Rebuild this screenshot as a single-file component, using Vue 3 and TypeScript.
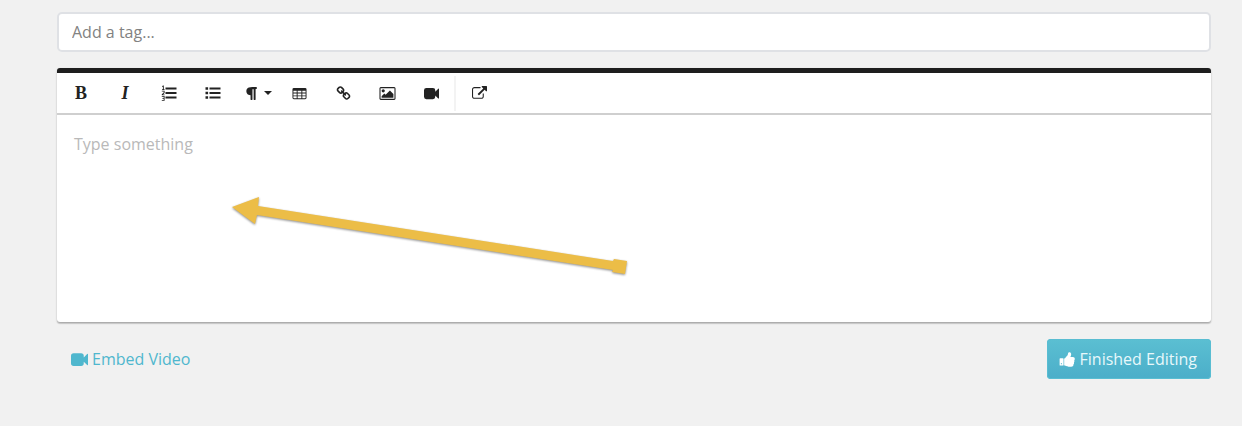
<script setup lang="ts">
import { ref } from 'vue'

interface Tool {
  name: string
  label: string
  view?: string
  path?: string
  text?: string
}

const tag = ref('')
const body = ref('')

const camera =
  'M2.500 2H9.500Q12 2 12 4.500V6L15.200 2.800Q16 2.200 16 3.200V12.800Q16 13.800 15.200 13.200L12 10V11.500Q12 14 9.500 14H2.500Q0 14 0 11.500V4.500Q0 2 2.500 2Z'
const thumb =
  'M320 1344q0-26-19-45t-45-19q-27 0-45.5 19t-18.5 45q0 27 18.5 45.5t45.5 18.5q26 0 45-18.5t19-45.5zm160-512v640q0 26-19 45t-45 19h-288q-26 0-45-19t-19-45v-640q0-26 19-45t45-19h288q26 0 45 19t19 45zm1184 0q0 86-55 149 15 44 15 76 3 76-43 137 17 56 0 117-15 57-54 94 9 112-49 181-64 76-197 78h-129q-66 0-144-15.5t-121.5-29-120.5-39.5q-123-43-158-44-26-1-45-19.5t-19-44.5v-641q0-25 18-43.5t43-20.5q24-2 76-59t101-121q68-87 101-120 18-18 31-48t17.5-48.5 13.5-60.5q7-39 12.5-61t19.5-52 34-50q19-19 45-19 46 0 82.5 10.5t60 26 40 40.5 24 45 12 50 5 45 .5 39q0 38-9.5 76t-19 60-27.5 56q-3 6-10 18t-11 22-8 24h277q78 0 135 57t57 135z'

const tools: Tool[] = [
  { name: 'bold', label: 'Bold', text: 'B' },
  { name: 'italic', label: 'Italic', text: 'I' },
  {
    name: 'ordered',
    label: 'Ordered list',
    view: '0 0 16 16',
    path: 'M4.500 2.500h11v2h-11zM4.500 7h11v2h-11zM4.500 11.500h11v2h-11zM1 1.200L2 .5h.8v3.700h.8V5H1v-.8h.9V1.800H1zM.8 5.800h2.800v2.200L2 9.400h1.600v.8H.8V9.200L2.700 7.600V6.600H.8zM.8 11h2.800v4.800H.8V15h1.900v-1.200H1.400V13h1.300v-1.200H.8z',
  },
  {
    name: 'unordered',
    label: 'Unordered list',
    view: '0 0 16 16',
    path: 'M4.500 2.500h11v2h-11zM4.500 7h11v2h-11zM4.500 11.500h11v2h-11zM.5 2.200h2.600v2.600H.5zM.5 6.700h2.600v2.600H.5zM.5 11.200h2.600v2.600H.5z',
  },
  {
    name: 'paragraph',
    label: 'Paragraph format',
    view: '0 0 1792 1792',
    path: 'M1534 189v73q0 29-18.5 61t-42.5 32q-50 0-54 1-26 6-32 31-3 11-3 64v1152q0 25-18 43t-43 18h-108q-25 0-43-18t-18-43v-1218h-143v1218q0 25-17.5 43t-43.5 18h-108q-26 0-43.5-18t-17.5-43v-496q-147-12-245-59-126-58-192-179-64-117-64-259 0-166 88-286 88-118 209-159 111-37 417-37h479q25 0 43 18t18 43z',
  },
  {
    name: 'table',
    label: 'Insert table',
    view: '0 0 16 16',
    path: 'M2 2h12q1.500 0 1.500 1.500v9q0 1.500-1.500 1.500H2Q.5 14 .5 12.500v-9Q.5 2 2 2zM1.500 5v2h3.500V5zM6 5v2h4V5zM11 5v2h3.500V5zM1.500 8v2h3.500V8zM6 8v2h4V8zM11 8v2h3.500V8zM1.500 11v1.500q0 .5.5.5h3v-2zM6 11v2h4v-2zM11 11v2h3q.5 0 .5-.5V11z',
  },
  {
    name: 'link',
    label: 'Insert link',
    view: '0 0 1792 1792',
    path: 'M1520 1216q0-40-28-68l-208-208q-28-28-68-28-42 0-72 32 3 3 19 18.5t21.5 21.5 15 19 13 25.5 3.5 27.5q0 40-28 68t-68 28q-15 0-27.5-3.5t-25.5-13-19-15-21.5-21.5-18.5-19q-33 31-33 73 0 40 28 68l206 207q27 27 68 27 40 0 68-26l147-146q28-28 28-67zm-703-705q0-40-28-68l-206-207q-28-28-68-28-39 0-68 27l-147 146q-28 28-28 67 0 40 28 68l208 208q27 27 68 27 42 0 72-31-3-3-19-18.5t-21.5-21.5-15-19-13-25.5-3.5-27.5q0-40 28-68t68-28q15 0 27.5 3.5t25.5 13 19 15 21.5 21.5 18.5 19q33-31 33-73zm895 705q0 120-85 203l-147 146q-83 83-203 83-121 0-204-85l-206-207q-83-83-83-203 0-123 88-209l-88-88q-86 88-208 88-120 0-204-84l-208-208q-84-84-84-204t85-203l147-146q83-83 203-83 121 0 204 85l206 207q83 83 83 203 0 123-88 209l88 88q86-88 208-88 120 0 204 84l208 208q84 84 84 204z',
  },
  {
    name: 'image',
    label: 'Insert image',
    view: '-64 0 1920 1792',
    path: 'M576 576q0 80-56 136t-136 56-136-56-56-136 56-136 136-56 136 56 56 136zm1024 384v448h-1408v-192l320-320 160 160 512-512zm96-704h-1600q-13 0-22.5 9.5t-9.5 22.5v1216q0 13 9.5 22.5t22.5 9.5h1600q13 0 22.5-9.5t9.5-22.5v-1216q0-13-9.5-22.5t-22.5-9.5zm160 32v1216q0 66-47 113t-113 47h-1600q-66 0-113-47t-47-113v-1216q0-66 47-113t113-47h1600q66 0 113 47t47 113z',
  },
  { name: 'video', label: 'Insert video', view: '0 0 16 16', path: camera },
  {
    name: 'external',
    label: 'Open in new window',
    view: '0 0 1792 1792',
    path: 'M1408 928v320q0 119-84.5 203.5t-203.5 84.5h-832q-119 0-203.5-84.5t-84.5-203.5v-832q0-119 84.5-203.5t203.5-84.5h704q14 0 23 9t9 23v64q0 14-9 23t-23 9h-704q-66 0-113 47t-47 113v832q0 66 47 113t113 47h832q66 0 113-47t47-113v-320q0-14 9-23t23-9h64q14 0 23 9t9 23zm384-864v512q0 26-19 45t-45 19-45-19l-176-176-652 652q-10 10-23 10t-23-10l-114-114q-10-10-10-23t10-23l652-652-176-176q-19-19-19-45t19-45 45-19h512q26 0 45 19t19 45z',
  },
]
</script>

<template>
  <main class="page">
    <input v-model="tag" class="tag" type="text" placeholder="Add a tag..." aria-label="Add a tag" />

    <section class="editor">
      <div class="toolbar" role="toolbar" aria-label="Formatting">
        <template v-for="tool in tools" :key="tool.name">
          <span v-if="tool.name === 'external'" class="separator"></span>
          <button type="button" class="tool" :class="tool.name" :aria-label="tool.label">
            <span v-if="tool.text">{{ tool.text }}</span>
            <svg v-else class="icon" :viewBox="tool.view" aria-hidden="true">
              <path :d="tool.path" fill-rule="evenodd" />
            </svg>
            <span v-if="tool.name === 'paragraph'" class="caret"></span>
          </button>
        </template>
      </div>
      <textarea v-model="body" class="body" placeholder="Type something" aria-label="Content"></textarea>
      <svg class="arrow" viewBox="0 0 404 86" aria-hidden="true">
        <path d="M4 14 31 4 30 13 385 68 386 66 399 68 397 81 384 79 385 77 29 22 27 31Z" />
      </svg>
    </section>

    <footer class="actions">
      <a class="embed" href="#">
        <svg class="action-icon" viewBox="0 0 16 16" aria-hidden="true"><path :d="camera" /></svg>
        <span>Embed Video</span>
      </a>
      <button type="button" class="finish">
        <svg class="action-icon" viewBox="0 0 1792 1792" aria-hidden="true"><path :d="thumb" /></svg>
        <span>Finished Editing</span>
      </button>
    </footer>
  </main>
</template>

<style>
body {
  background: #f1f1f1;
}
</style>

<style scoped>
.page {
  box-sizing: border-box;
  padding: 12px 31px 16px 57px;
  font-family: 'Open Sans', 'Noto Sans', sans-serif;
  font-size: 16px;
}

.tag {
  display: block;
  box-sizing: border-box;
  width: 100%;
  height: 40px;
  padding: 0 13px;
  border: 2px solid #dfe1e5;
  border-radius: 5px;
  background: #fff;
  color: #555;
  font: inherit;
  outline: none;
}

.tag::placeholder {
  color: #828282;
  opacity: 1;
}

.editor {
  position: relative;
  margin-top: 16px;
  border-top: 5px solid #1e1e1e;
  border-radius: 3px;
  background: #fff;
  box-shadow: 0 1px 2px rgba(0, 0, 0, 0.24), 0 2px 1px rgba(0, 0, 0, 0.12);
}

.toolbar {
  display: flex;
  align-items: stretch;
  height: 40px;
  padding-left: 2px;
  border-bottom: 2px solid #cfcfcf;
}

.tool {
  display: flex;
  align-items: center;
  justify-content: center;
  gap: 5px;
  width: 44px;
  padding: 0;
  border: 0;
  background: transparent;
  color: #222;
}

.bold,
.italic {
  font: bold 18px 'Liberation Serif', serif;
}

.italic {
  font-style: italic;
}

.paragraph {
  width: 42px;
  padding-left: 3px;
}

.icon {
  width: 15px;
  height: 15px;
  fill: currentColor;
}

.ordered .icon,
.unordered .icon {
  width: 16px;
  height: 16px;
}

.image .icon {
  width: 17px;
}

.caret {
  border: 4px solid transparent;
  border-top-color: currentColor;
  border-bottom: 0;
}

.separator {
  width: 2px;
  margin: 3px 1px 2px;
  background: #f3f3f3;
}

.body {
  display: block;
  box-sizing: border-box;
  width: 100%;
  height: 207px;
  padding: 17px;
  border: 0;
  background: transparent;
  color: #444;
  font: inherit;
  line-height: 24px;
  resize: none;
  outline: none;
}

.body::placeholder {
  color: #b9b9b9;
  opacity: 1;
}

.arrow {
  position: absolute;
  top: 120px;
  left: 171px;
  width: 404px;
  height: 86px;
  fill: #ecbd47;
  filter: drop-shadow(0 1px 1px rgba(0, 0, 0, 0.45));
  pointer-events: none;
}

.actions {
  display: flex;
  justify-content: space-between;
  align-items: center;
  margin-top: 17px;
  padding-left: 14px;
}

.embed,
.finish {
  display: flex;
  align-items: center;
  gap: 4px;
}

.embed {
  color: #4fb7ce;
  text-decoration: none;
}

.finish {
  height: 40px;
  padding: 0 14px 0 12px;
  border: 0;
  border-radius: 4px;
  background: linear-gradient(#5bbfd2, #4baec9);
  box-shadow: inset 0 0 0 1px #59bdd2;
  color: #e8f8fb;
  font: inherit;
}

.action-icon {
  width: 17px;
  height: 17px;
  fill: currentColor;
}

.finish .action-icon {
  fill: #fff;
}
</style>
